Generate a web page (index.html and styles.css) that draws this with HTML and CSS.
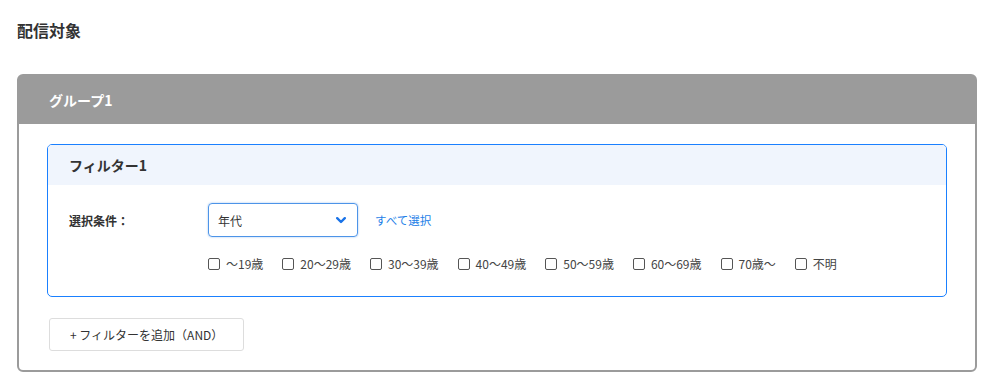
FILE: index.html
```html
<!DOCTYPE html>
<html lang="ja">
<head>
    <meta charset="utf-8">
    <title>配信対象</title>
    <link rel="stylesheet" href="styles.css">
</head>
<body>
    <div class="page">
        <h2 class="page-title">配信対象</h2>

        <div class="group">
            <div class="group-header">グループ1</div>
            <div class="group-body">
                <div class="filter">
                    <div class="filter-header">フィルター1</div>
                    <div class="filter-body">
                        <div class="filter-row">
                            <div class="filter-label">選択条件：</div>
                            <div class="select-box">
                                <span>年代</span>
                                <svg class="chevron" width="10" height="7" viewBox="0 0 10 7">
                                    <path d="M1.2 1.2 L5 5 L8.8 1.2" fill="none" stroke="#1a73e8" stroke-width="2.4" stroke-linecap="round" stroke-linejoin="round"/>
                                </svg>
                            </div>
                            <a class="select-all" href="#">すべて選択</a>
                        </div>
                        <div class="check-list">
                            <label class="check-item"><span class="check-box"></span>～19歳</label>
                            <label class="check-item"><span class="check-box"></span>20～29歳</label>
                            <label class="check-item"><span class="check-box"></span>30～39歳</label>
                            <label class="check-item"><span class="check-box"></span>40～49歳</label>
                            <label class="check-item"><span class="check-box"></span>50～59歳</label>
                            <label class="check-item"><span class="check-box"></span>60～69歳</label>
                            <label class="check-item"><span class="check-box"></span>70歳～</label>
                            <label class="check-item"><span class="check-box"></span>不明</label>
                        </div>
                    </div>
                </div>

                <button class="add-filter">+ フィルターを追加（AND）</button>
            </div>
        </div>
    </div>
</body>
</html>
```

FILE: styles.css
```css
body {
    margin: 0;
    font-family: "Noto Sans CJK JP", sans-serif;
    color: #333;
    background: #fff;
}

.page {
    padding: 18px 26px 0 17px;
}

.page-title {
    margin: 0 0 32px;
    font-size: 16px;
    line-height: 24px;
    font-weight: bold;
    color: #333;
}

.group {
    border: 2px solid #9b9b9b;
    border-radius: 6px;
}

.group-header {
    height: 48px;
    line-height: 48px;
    padding-left: 30px;
    background: #9b9b9b;
    color: #fff;
    font-size: 14px;
    font-weight: bold;
}

.group-body {
    padding: 20px 28px 19px;
}

.filter {
    border: 1px solid #1a80ff;
    border-radius: 5px;
}

.filter-header {
    height: 40px;
    line-height: 40px;
    padding-left: 21px;
    background: #f0f5fd;
    border-radius: 4px 4px 0 0;
    font-size: 14px;
    font-weight: bold;
    color: #333;
}

.filter-body {
    padding: 18px 20px 22px 21px;
}

.filter-row {
    display: flex;
    align-items: center;
}

.filter-label {
    width: 139px;
    font-size: 12px;
    font-weight: bold;
    color: #333;
}

.select-box {
    display: flex;
    align-items: center;
    justify-content: space-between;
    box-sizing: border-box;
    width: 150px;
    height: 34px;
    padding: 0 11px 0 9px;
    border: 1px solid #4d94e8;
    border-radius: 4px;
    box-shadow: 0 0 2px rgba(77, 148, 232, 0.6);
    font-size: 12px;
    color: #333;
}

.select-all {
    margin-left: 17px;
    font-size: 11.5px;
    color: #1e7fe8;
    text-decoration: none;
}

.check-list {
    display: flex;
    align-items: center;
    gap: 19px;
    margin: 17px 0 0 139px;
}

.check-item {
    display: flex;
    align-items: center;
    font-size: 12px;
    line-height: 20px;
    color: #444;
}

.check-box {
    box-sizing: border-box;
    width: 12px;
    height: 12px;
    margin-right: 6px;
    border: 1px solid #555;
    border-radius: 2px;
    background: #fff;
}

.add-filter {
    display: block;
    height: 33px;
    margin: 21px 0 0 2px;
    padding: 0 20px;
    border: 1px solid #ddd;
    border-radius: 3px;
    background: #fff;
    font-family: inherit;
    font-size: 12px;
    color: #333;
}
```
